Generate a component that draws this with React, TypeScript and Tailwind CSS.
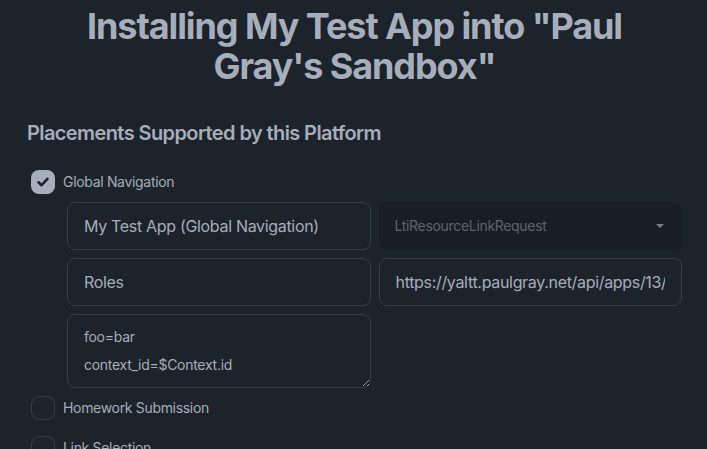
import React from 'react'

const font = { fontFamily: 'Inter, "Noto Sans", sans-serif' }

const Check = ({ checked }: { checked?: boolean }) => (
  <div
    className={
      checked
        ? 'flex size-6 shrink-0 items-center justify-center rounded-lg bg-[#a6adbb]'
        : 'size-6 shrink-0 rounded-lg border border-[#383e47]'
    }
  >
    {checked && (
      <svg width="14" height="14" viewBox="0 0 14 14" fill="none">
        <path d="M2.5 7.3 L5.6 10.2 L11.5 3.8" stroke="#1d232a" strokeWidth="2.6" strokeLinecap="round" strokeLinejoin="round" />
      </svg>
    )}
  </div>
)

const Placement = ({ label, checked }: { label: string; checked?: boolean }) => (
  <label className="flex items-center gap-2 px-1 py-2">
    <Check checked={checked} />
    <span className="text-sm text-[#a6adbb]">{label}</span>
  </label>
)

const inputCls =
  'h-12 w-full min-w-0 rounded-lg border border-[#383e47] bg-[#1d232a] px-4 text-base tracking-[-0.02em] text-[#a6adbb] outline-none'

export default function App() {
  return (
    <div className="min-h-screen bg-[#1d232a] pl-[27px] pr-[25px] pt-[6px] tracking-[-0.02em]" style={font}>
      <h1 className="px-10 text-center text-4xl leading-10 font-bold tracking-[-0.03em] text-[#a6adbb]">
        Installing My Test App into "Paul Gray's Sandbox"
      </h1>

      <h2 className="mt-[33px] text-xl leading-7 font-semibold tracking-[-0.03em] text-[#a6adbb]">
        Placements Supported by this Platform
      </h2>

      <div className="mt-[15px] flex flex-col">
        <Placement label="Global Navigation" checked />
        <div className="ml-10 grid grid-cols-2 gap-2">
          <input className={inputCls} readOnly value="My Test App (Global Navigation)" />
          <div className="flex h-12 items-center justify-between rounded-lg bg-[#191e24] pl-4 pr-[18px] text-sm text-[#5e646e]">
            <span>LtiResourceLinkRequest</span>
            <svg width="8" height="4" viewBox="0 0 8 4">
              <path d="M0 0 H8 L4 4 Z" fill="#7a808a" />
            </svg>
          </div>
          <input className={inputCls} readOnly value="Roles" />
          <input className={inputCls} readOnly value="https://yaltt.paulgray.net/api/apps/13/launch" />
          <textarea
            className="h-[74px] w-full resize-y rounded-lg border border-[#383e47] bg-[#1d232a] px-4 py-2 text-sm leading-7 tracking-[-0.02em] text-[#a6adbb] outline-none"
            readOnly
            rows={2}
            value={'foo=bar\ncontext_id=$Context.id'}
          />
        </div>
        <Placement label="Homework Submission" />
        <Placement label="Link Selection" />
      </div>
    </div>
  )
}
